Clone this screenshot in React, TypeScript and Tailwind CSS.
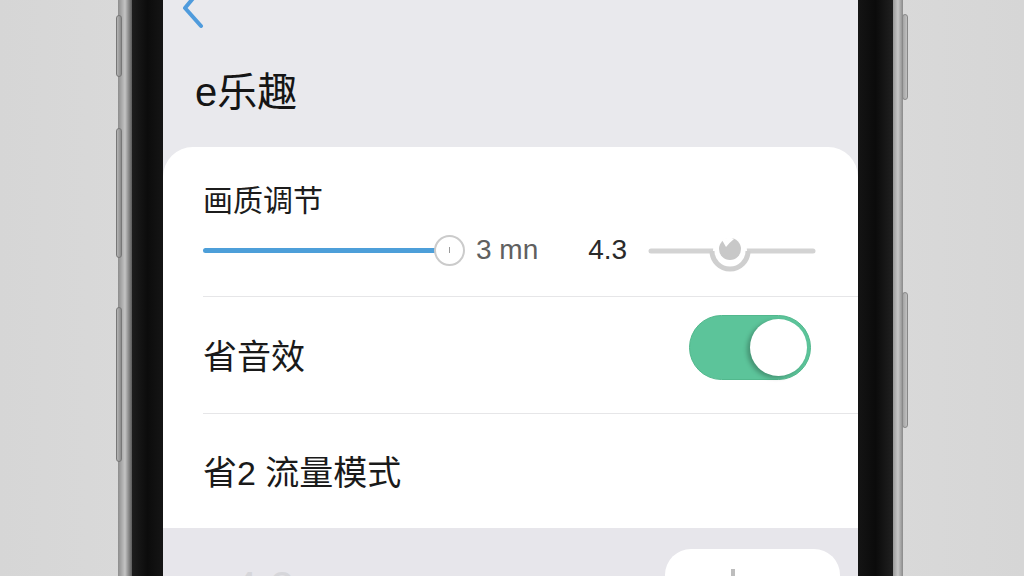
import React from "react";

const font = { fontFamily: '"Liberation Sans", "Noto Sans CJK SC", sans-serif' };

function BackChevron() {
  return (
    <svg width="30" height="36" viewBox="0 0 30 36" className="block">
      <path
        d="M19 -6 L4 12 L20 30"
        fill="none"
        stroke="#4f9bdc"
        strokeWidth="4"
        strokeLinecap="round"
        strokeLinejoin="round"
      />
    </svg>
  );
}

function OddKnobSlider() {
  return (
    <svg width="168" height="44" viewBox="0 0 168 44" className="block">
      <line x1="3" y1="23" x2="165" y2="23" stroke="#d3d3d3" strokeWidth="5" strokeLinecap="round" />
      <circle cx="82" cy="23" r="17" fill="#fff" />
      <path d="M64 23 A18 18 0 0 0 100 23" fill="none" stroke="#cfcfcf" strokeWidth="5" />
      <circle cx="82" cy="21" r="11" fill="#c8c8c8" />
      <path d="M74 12 Q80 8 86 11 Q81 15 78 19 Z" fill="#fff" />
    </svg>
  );
}

export default function App() {
  return (
    <div className="relative h-[576px] w-[1024px] overflow-hidden bg-gradient-to-r from-[#d6d6d6] via-[#e2e2e2] to-[#d6d6d6]" style={font}>
      <div className="flex h-full pl-[118px]">
        <div className="relative flex h-full">
          {/* left frame */}
          <div className="h-full w-[14px] bg-gradient-to-r from-[#8d8d8d] via-[#c4c4c4] to-[#5a5a5a]" />
          <div className="h-full w-[31px] bg-gradient-to-r from-[#1d1d1d] via-[#0c0c0c] to-[#151515]" />

          {/* screen */}
          <div className="flex h-full w-[695px] flex-col bg-[#e9e9ed]">
            <div className="h-[147px] shrink-0">
              <div className="-mt-[4px] pl-[18px]">
                <BackChevron />
              </div>
              <div className="mt-[38px] pl-[32px] text-[40px] leading-[44px] text-[#151515]">e乐趣</div>
            </div>

            <div className="shrink-0 rounded-t-[30px] bg-white pl-[40px]">
              <div className="h-[150px] border-b border-[#e6e6e8] pt-[38px]">
                <div className="text-[30px] leading-[32px] text-[#1c1c1c]">画质调节</div>
                <div className="mt-[15px] flex h-[36px] items-center">
                  <div className="h-[5px] w-[238px] rounded-full bg-[#4d9fd9]" />
                  <div className="-ml-[7px] flex h-[31px] w-[31px] items-center justify-center rounded-full border-2 border-[#cbcbcb] bg-white">
                    <div className="h-[6px] w-[1px] bg-[#9a9a9a]" />
                  </div>
                  <div className="ml-[11px] text-[28px] text-[#606060]">3 mn</div>
                  <div className="ml-[50px] text-[28px] text-[#2a2a2a]">4.3</div>
                  <div className="ml-[21px]">
                    <OddKnobSlider />
                  </div>
                </div>
              </div>

              <div className="flex h-[117px] items-center justify-between border-b border-[#e6e6e8] pr-[47px]">
                <div className="mt-[4px] text-[34px] leading-[36px] text-[#1a1a1a]">省音效</div>
                <div className="mb-[16px] flex h-[65px] w-[122px] items-center justify-end rounded-full border border-[#52b88d] bg-[#5cc49a] pr-[3px]">
                  <div className="h-[57px] w-[57px] rounded-full bg-white shadow-[-3px_2px_4px_rgba(0,0,0,0.25)]" />
                </div>
              </div>

              <div className="flex h-[114px] items-center pt-[4px]">
                <div className="text-[34px] leading-[36px] text-[#1a1a1a]">省2 流量模式</div>
              </div>
            </div>

            <div className="flex flex-1 items-start justify-between bg-[#e7e6eb] pl-[70px] pr-[18px]">
              <div className="mt-[36px] text-[44px] leading-[48px] text-[#d6d6da]">4.2</div>
              <div className="mt-[21px] flex h-[60px] w-[175px] justify-center rounded-[26px] bg-white pt-[20px]">
                <div className="ml-[-40px] h-[20px] w-[4px] bg-[#bdbdbd]" />
              </div>
            </div>
          </div>

          {/* right frame */}
          <div className="h-full w-[35px] bg-gradient-to-r from-[#141414] via-[#0b0b0b] to-[#202020]" />
          <div className="h-full w-[10px] bg-gradient-to-r from-[#9a9a9a] via-[#c8c8c8] to-[#8a8a8a]" />

          {/* side buttons */}
          <div className="absolute left-[-2px] top-[15px] h-[62px] w-[6px] rounded-sm border border-[#777] bg-gradient-to-r from-[#b5b5b5] to-[#8a8a8a]" />
          <div className="absolute left-[-2px] top-[128px] h-[130px] w-[6px] rounded-sm border border-[#777] bg-gradient-to-r from-[#b5b5b5] to-[#8a8a8a]" />
          <div className="absolute left-[-2px] top-[307px] h-[155px] w-[6px] rounded-sm border border-[#777] bg-gradient-to-r from-[#b5b5b5] to-[#8a8a8a]" />
          <div className="absolute right-[-5px] top-[14px] h-[86px] w-[6px] rounded-sm border border-[#888] bg-gradient-to-r from-[#a5a5a5] to-[#c0c0c0]" />
          <div className="absolute right-[-5px] top-[292px] h-[136px] w-[6px] rounded-sm border border-[#888] bg-gradient-to-r from-[#a5a5a5] to-[#c0c0c0]" />
        </div>
      </div>
    </div>
  );
}
